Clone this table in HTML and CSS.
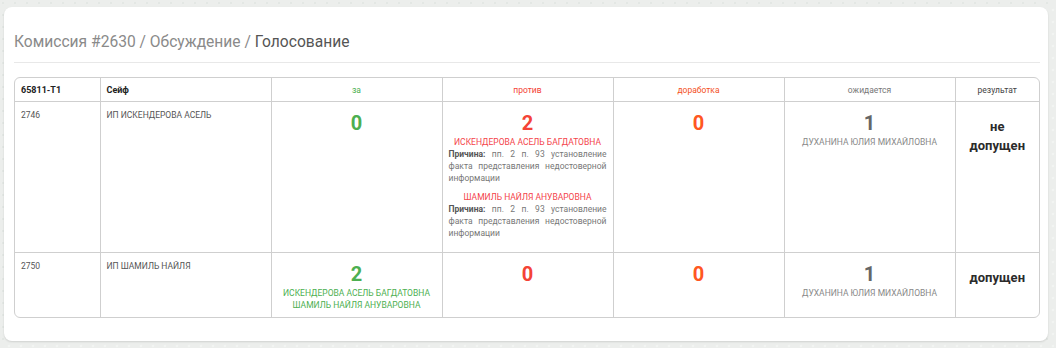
FILE: index.html
```html
<!DOCTYPE html>
<html lang="ru">
<head>
<meta charset="utf-8">
<link rel="stylesheet" href="styles.css">
</head>
<body>
<div class="card">
  <h1 class="title"><span class="crumb">Комиссия #2630 / Обсуждение / </span><span class="current">Голосование</span></h1>
  <div class="divider"></div>
  <div class="table-wrap">
    <table class="votes">
      <colgroup>
        <col class="c-id"><col class="c-name"><col class="c-vote"><col class="c-vote"><col class="c-vote"><col class="c-vote"><col class="c-res">
      </colgroup>
      <thead>
        <tr>
          <th class="left strong">65811-T1</th>
          <th class="left strong">Сейф</th>
          <th class="h-for">за</th>
          <th class="h-against">против</th>
          <th class="h-rework">доработка</th>
          <th class="h-wait">ожидается</th>
          <th class="h-res">результат</th>
        </tr>
      </thead>
      <tbody>
        <tr>
          <td class="left">2746</td>
          <td class="left">ИП ИСКЕНДЕРОВА АСЕЛЬ</td>
          <td class="vote"><div class="num green">0</div></td>
          <td class="vote">
            <div class="num red">2</div>
            <div class="reason-block">
              <div class="name red-name">ИСКЕНДЕРОВА АСЕЛЬ БАГДАТОВНА</div>
              <div class="reason"><b>Причина:</b> пп. 2 п. 93 установление факта представления недостоверной информации</div>
            </div>
            <div class="reason-block">
              <div class="name red-name">ШАМИЛЬ НАЙЛЯ АНУВАРОВНА</div>
              <div class="reason"><b>Причина:</b> пп. 2 п. 93 установление факта представления недостоверной информации</div>
            </div>
          </td>
          <td class="vote"><div class="num orange">0</div></td>
          <td class="vote">
            <div class="num gray">1</div>
            <div class="name gray-name">ДУХАНИНА ЮЛИЯ МИХАЙЛОВНА</div>
          </td>
          <td class="result"><div class="res-text">не допущен</div></td>
        </tr>
        <tr>
          <td class="left">2750</td>
          <td class="left">ИП ШАМИЛЬ НАЙЛЯ</td>
          <td class="vote">
            <div class="num green">2</div>
            <div class="name green-name">ИСКЕНДЕРОВА АСЕЛЬ БАГДАТОВНА</div>
            <div class="name green-name">ШАМИЛЬ НАЙЛЯ АНУВАРОВНА</div>
          </td>
          <td class="vote"><div class="num red">0</div></td>
          <td class="vote"><div class="num orange">0</div></td>
          <td class="vote">
            <div class="num gray">1</div>
            <div class="name gray-name">ДУХАНИНА ЮЛИЯ МИХАЙЛОВНА</div>
          </td>
          <td class="result"><div class="res-text">допущен</div></td>
        </tr>
      </tbody>
    </table>
  </div>
</div>
</body>
</html>
```

FILE: styles.css
```css
html, body {
  margin: 0;
  height: 100%;
}
body {
  padding: 7px 8px 0 4px;
  box-sizing: border-box;
  background-color: #eceeec;
  background-image:
    radial-gradient(circle at 3px 3px, #e3e7e4 1px, transparent 1.6px),
    radial-gradient(circle at 9px 10px, #f2f4f2 1px, transparent 1.6px);
  background-size: 12px 12px, 12px 12px;
  font-family: Roboto, "Liberation Sans", Arial, sans-serif;
  color: #555;
}
.card {
  background: #fff;
  border-radius: 8px;
  padding: 25px 8px 23px 10px;
  box-shadow: 0 1px 2px rgba(0,0,0,0.12);
}
.title {
  margin: 0;
  font-size: 15.6px;
  line-height: 20px;
  font-weight: 400;
}
.crumb { color: #8a8a8a; }
.current { color: #555; }
.divider {
  height: 1px;
  background: #e8e8e8;
  margin: 10px 0 14px;
}
.table-wrap {
  border: 1px solid #cfcfcf;
  border-radius: 6px;
  overflow: hidden;
}
.votes {
  width: 100%;
  border-collapse: collapse;
  table-layout: fixed;
  font-size: 8.5px;
  line-height: 12px;
}
.c-id { width: 85px; }
.c-name { width: 171px; }
.c-vote { width: 171px; }
.c-res { width: auto; }
.votes th, .votes td {
  border-right: 1px solid #cfcfcf;
  border-bottom: 1px solid #cfcfcf;
  vertical-align: top;
}
.votes th:last-child, .votes td:last-child { border-right: none; }
.votes tbody tr:last-child td { border-bottom: none; }
.votes th {
  height: 23px;
  padding: 0 6px;
  font-weight: 400;
  text-align: center;
  vertical-align: middle;
}
.votes th.left { text-align: left; }
.votes th.strong { font-weight: 700; color: #222; font-size: 9px; }
.h-for { color: #4caf50; }
.h-against { color: #f44336; }
.h-rework { color: #f4511e; }
.h-wait { color: #777; }
.h-res { color: #444; }
.votes td {
  padding: 6px 6px 6px;
}
.votes td.left {
  text-align: left;
  color: #555;
  padding-top: 7px;
}
.votes td.vote {
  text-align: center;
  padding: 8px 6px 6px;
}
.num {
  font-size: 20px;
  line-height: 26px;
  font-weight: 700;
}
.green { color: #4caf50; }
.red { color: #f44336; }
.orange { color: #ff5722; }
.gray { color: #666; }
.name { line-height: 12px; }
.red-name { color: #f4434a; }
.green-name { color: #4caf50; }
.gray-name { color: #888; }
.reason-block { margin-bottom: 7px; }
.reason {
  text-align: justify;
  color: #777;
}
.reason b { color: #555; }
.votes td.result {
  text-align: center;
  padding: 15px 6px 6px;
}
.res-text {
  font-size: 13px;
  line-height: 19px;
  font-weight: 700;
  color: #2b2b2b;
}
```
